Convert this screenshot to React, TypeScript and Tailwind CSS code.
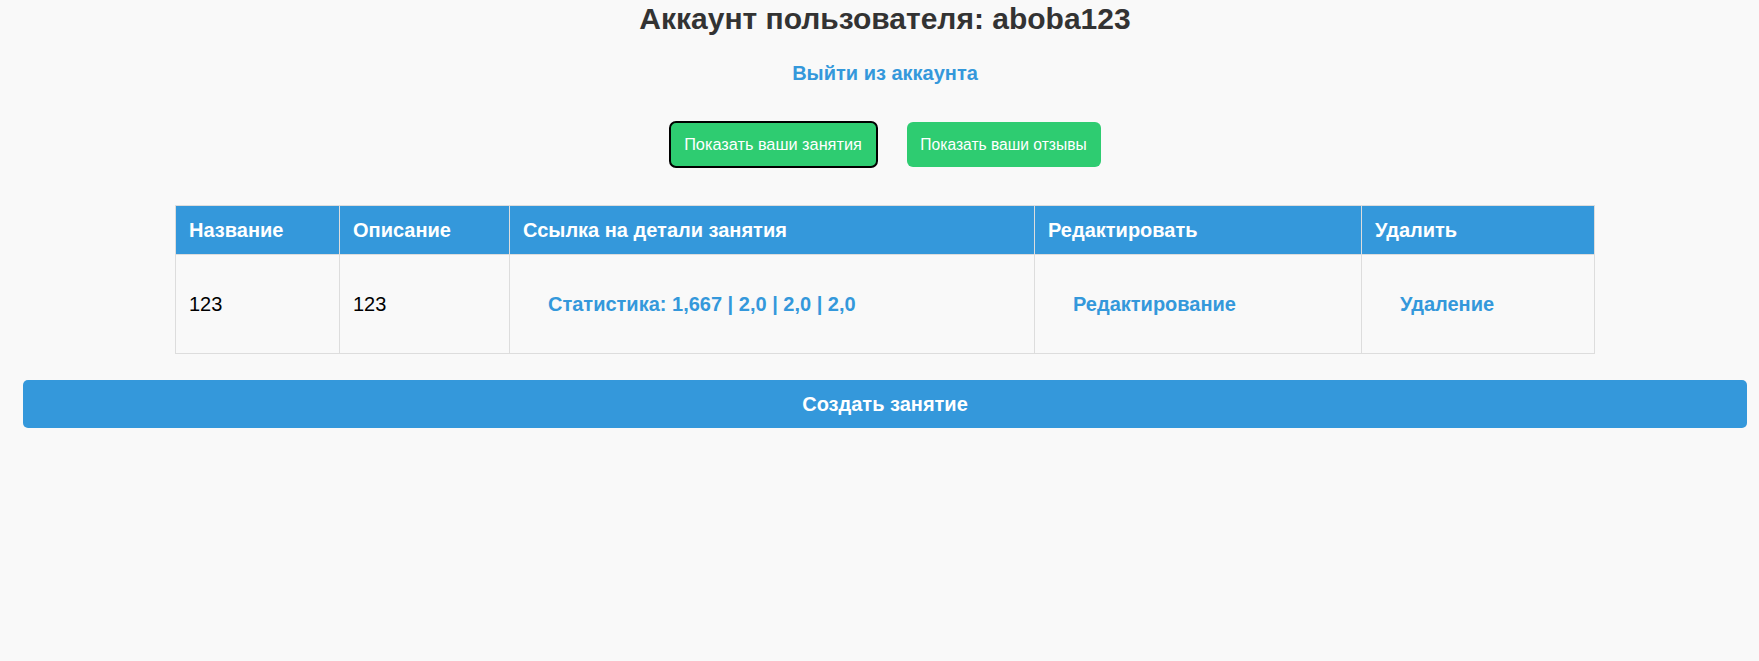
// App.tsx
const rows = [
  {
    name: '123',
    description: '123',
    stats: 'Статистика: 1,667 | 2,0 | 2,0 | 2,0',
  },
];

export default function App() {
  return (
    <div className="min-h-screen bg-[#f9f9f9] pl-[23px] pr-[12px] font-['Liberation_Sans',Arial,sans-serif] text-black">
      <h1 className="text-center text-[30px] leading-[37px] font-bold text-[#333]">
        Аккаунт пользователя: aboba123
      </h1>

      <div className="mt-[25px] text-center">
        <a href="#" className="text-[20px] leading-[23px] font-bold text-[#3498db]">
          Выйти из аккаунта
        </a>
      </div>

      <div className="mt-[35px] flex justify-center gap-[30px]">
        <button className="h-[45px] w-[207px] rounded-[6px] bg-[#2ecc71] text-center text-[16.3px] text-white outline-2 outline-black outline-offset-[-1px]">
          Показать ваши занятия
        </button>
        <button className="h-[45px] w-[194px] rounded-[6px] bg-[#2ecc71] text-center text-[15.6px] text-white">
          Показать ваши отзывы
        </button>
      </div>

      <table className="mx-auto mt-[38px] w-[1419px] table-fixed border-collapse text-[20px]">
        <thead>
          <tr className="h-[49px] bg-[#3498db] text-left text-white">
            <th className="w-[164px] border border-[#ddd] px-[13px] font-bold">Название</th>
            <th className="w-[170px] border border-[#ddd] px-[13px] font-bold">Описание</th>
            <th className="w-[525px] border border-[#ddd] px-[13px] font-bold">Ссылка на детали занятия</th>
            <th className="w-[327px] border border-[#ddd] px-[13px] font-bold">Редактировать</th>
            <th className="w-[233px] border border-[#ddd] px-[13px] font-bold">Удалить</th>
          </tr>
        </thead>
        <tbody>
          {rows.map((r, i) => (
            <tr key={i} className="h-[99px]">
              <td className="border border-[#ddd] px-[13px]">{r.name}</td>
              <td className="border border-[#ddd] px-[13px]">{r.description}</td>
              <td className="border border-[#ddd] px-[13px]">
                <a href="#" className="inline-block px-[25px] font-bold text-[#3498db]">{r.stats}</a>
              </td>
              <td className="border border-[#ddd] px-[13px]">
                <a href="#" className="inline-block px-[25px] font-bold text-[#3498db]">Редактирование</a>
              </td>
              <td className="border border-[#ddd] px-[13px]">
                <a href="#" className="inline-block px-[25px] font-bold text-[#3498db]">Удаление</a>
              </td>
            </tr>
          ))}
        </tbody>
      </table>

      <button className="mt-[26px] h-[48px] w-full rounded-[5px] bg-[#3498db] text-[20px] font-bold text-white">
        Создать занятие
      </button>
    </div>
  );
}
